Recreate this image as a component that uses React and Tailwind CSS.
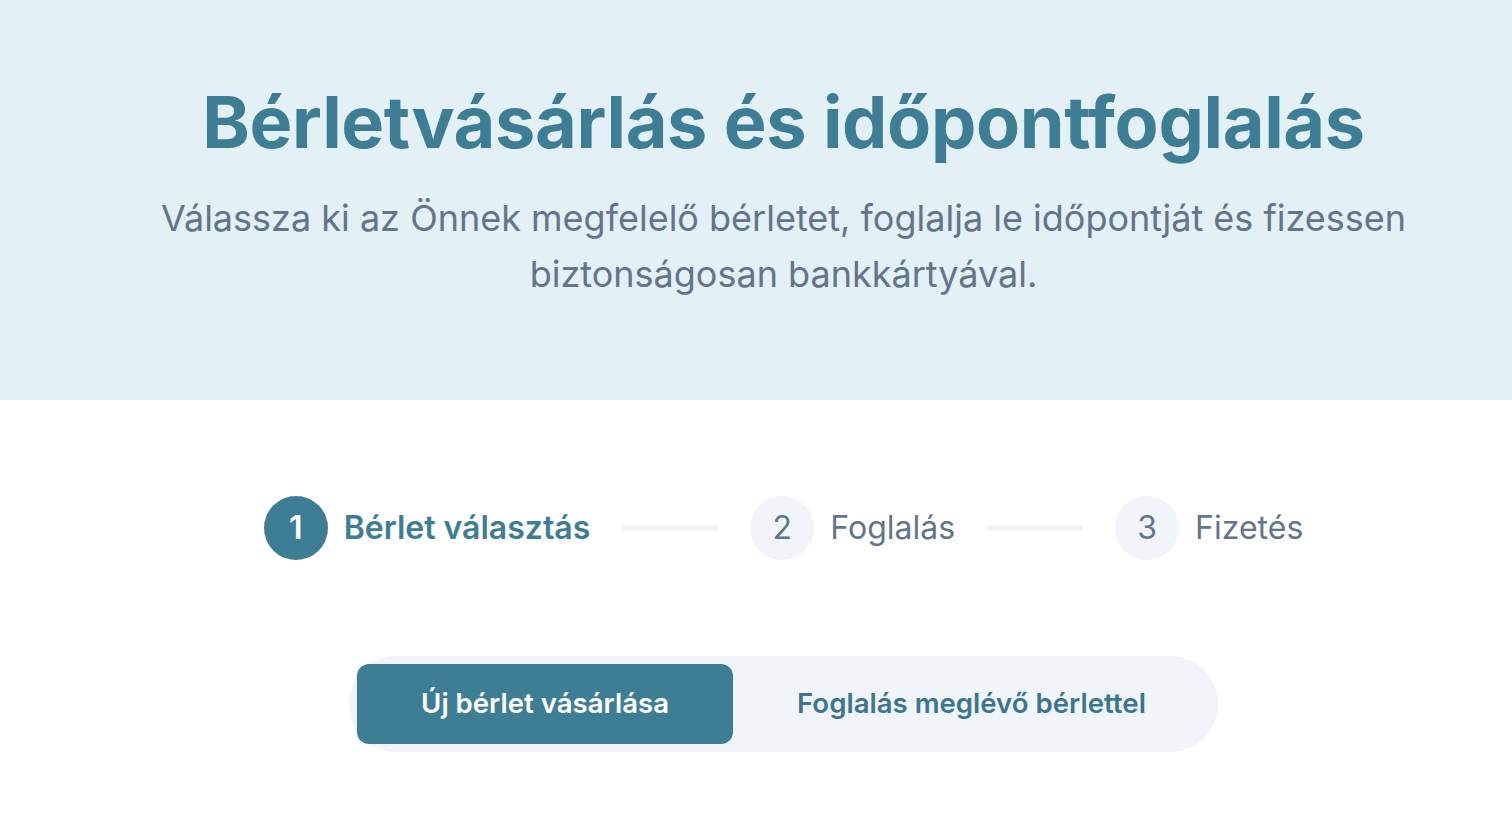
export default function App() {
  const font = { fontFamily: 'Inter, "Noto Sans", sans-serif' };
  return (
    <div className="min-h-screen bg-white" style={font}>
      <header className="bg-[#e3f0f5] h-[400px] flex flex-col items-center pl-[55px] pt-[78px]">
        <h1 className="text-[72px] leading-[88px] font-bold tracking-[-0.005em] text-[#3e7e95]">
          Bérletvásárlás és időpontfoglalás
        </h1>
        <p className="mt-[24px] text-[36px] leading-[56px] text-[#64748b] text-center max-w-[1300px]">
          Válassza ki az Önnek megfelelő bérletet, foglalja le időpontját és fizessen biztonságosan bankkártyával.
        </p>
      </header>
      <main className="flex flex-col items-center pl-[55px]">
        <div className="mt-[96px] flex items-center">
          <div className="flex items-center gap-4">
            <div className="w-16 h-16 rounded-full bg-[#3e7e95] text-white flex items-center justify-center text-[32px] font-semibold">1</div>
            <span className="text-[32px] font-semibold text-[#3e7e95]">Bérlet választás</span>
          </div>
          <div className="mx-8 w-24 h-1.5 bg-[#f1f5f9]"></div>
          <div className="flex items-center gap-4">
            <div className="w-16 h-16 rounded-full bg-[#f1f5f9] text-[#64748b] flex items-center justify-center text-[32px]">2</div>
            <span className="text-[32px] text-[#64748b]">Foglalás</span>
          </div>
          <div className="mx-8 w-24 h-1.5 bg-[#f1f5f9]"></div>
          <div className="flex items-center gap-4">
            <div className="w-16 h-16 rounded-full bg-[#f1f5f9] text-[#64748b] flex items-center justify-center text-[32px]">3</div>
            <span className="text-[32px] text-[#64748b]">Fizetés</span>
          </div>
        </div>
        <div className="mt-[96px] flex p-2 bg-[#f1f5f9] rounded-full">
          <button className="h-20 px-16 rounded-xl bg-[#3e7e95] text-white text-[27.6px] font-semibold">Új bérlet vásárlása</button>
          <button className="h-20 px-16 rounded-xl text-[#3b7590] text-[27.6px] font-semibold">Foglalás meglévő bérlettel</button>
        </div>
      </main>
    </div>
  );
}
